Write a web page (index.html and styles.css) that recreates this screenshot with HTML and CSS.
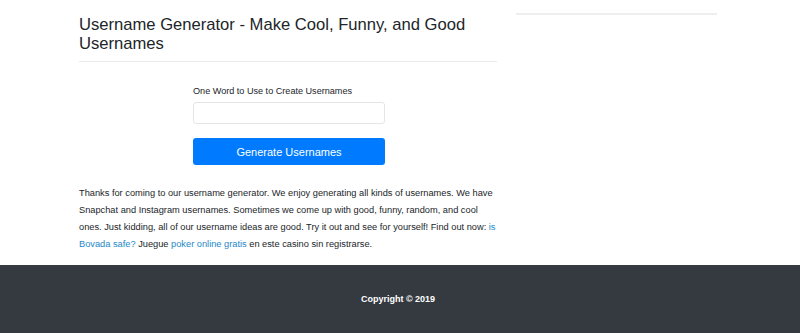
FILE: index.html
```html
<!DOCTYPE html>
<html lang="en">
<head>
  <meta charset="UTF-8">
  <meta name="viewport" content="width=device-width, initial-scale=1.0">
  <title>Username Generator</title>
  <link rel="stylesheet" href="styles.css">
</head>
<body>
  <div class="container">
    <div class="main">
      <h1>Username Generator - Make Cool, Funny, and Good Usernames</h1>
      <form class="gen-form" onsubmit="return false;">
        <label for="word">One Word to Use to Create Usernames</label>
        <input type="text" id="word">
        <button type="submit">Generate Usernames</button>
      </form>
      <p class="intro">Thanks for coming to our username generator. We enjoy generating all kinds of usernames. We have Snapchat and Instagram usernames. Sometimes we come up with good, funny, random, and cool ones. Just kidding, all of our username ideas are good. Try it out and see for yourself! Find out now: <a href="#">is Bovada safe?</a> Juegue <a href="#">poker online gratis</a> en este casino sin registrarse.</p>
    </div>
    <div class="sidebar">
      <hr>
    </div>
  </div>
  <footer>
    <p>Copyright &copy; 2019</p>
  </footer>
</body>
</html>
```

FILE: styles.css
```css
body {
  margin: 0;
  font-family: "Liberation Sans", Arial, sans-serif;
  color: #212529;
  background: #fff;
}
.container {
  width: 638px;
  margin: 0 auto;
  padding-right: 4px;
  display: flex;
  gap: 19px;
  height: 265px;
}
.main {
  width: 418px;
}
.sidebar {
  width: 201px;
  padding-top: 13px;
}
.sidebar hr {
  margin: 0;
  border: none;
  border-top: 2px solid #eee;
}
h1 {
  font-size: 16.6px;
  font-weight: normal;
  line-height: 19px;
  margin: 15px 0 0;
  padding-bottom: 8px;
  border-bottom: 1px solid #e9ecef;
}
.gen-form {
  width: 192px;
  margin: 23px 0 0 114px;
  display: flex;
  flex-direction: column;
}
label {
  font-size: 9.1px;
  line-height: 12px;
  margin-bottom: 5px;
}
input {
  height: 22px;
  box-sizing: border-box;
  border: 1px solid #e3e6e9;
  border-radius: 3px;
  margin: 0;
}
button {
  margin-top: 14px;
  height: 27px;
  background: #007bff;
  color: #fff;
  border: none;
  border-radius: 3px;
  font-family: inherit;
  font-size: 11px;
  cursor: pointer;
}
.intro {
  font-size: 9.25px;
  line-height: 17px;
  margin: 20px 0 0;
}
.intro a {
  color: #1e88c8;
  text-decoration: none;
}
footer {
  background: #343a40;
  height: 68px;
  display: flex;
  align-items: center;
  justify-content: center;
}
footer p {
  margin: 0 4px 0 0;
  color: #fff;
  font-size: 9px;
  font-weight: bold;
}
```
